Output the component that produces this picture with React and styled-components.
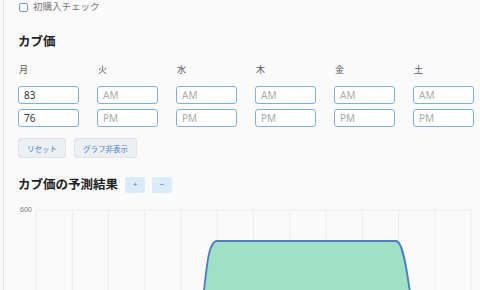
import styled, { createGlobalStyle } from 'styled-components';

const GlobalStyle = createGlobalStyle`
  html, body {
    margin: 0;
    padding: 0;
    background: #fafafa;
    overflow: hidden;
  }
  body {
    font-family: "Noto Sans", "Noto Sans CJK JP", sans-serif;
  }
`;

const days = ['月', '火', '水', '木', '金', '土'];
const am = ['83', '', '', '', '', ''];
const pm = ['76', '', '', '', '', ''];

export default function App() {
  const cols = Array.from({ length: 13 }, (_, i) => 18 + i * 36.25);
  return (
    <>
      <GlobalStyle />
      <Page>
        <CheckRow>
          <Box />
          <CheckLabel>初購入チェック</CheckLabel>
        </CheckRow>

        <Heading>カブ価</Heading>

        <Grid>
          {days.map((d) => (
            <DayLabel key={d}>{d}</DayLabel>
          ))}
          {am.map((v, i) => (
            <Field key={'a' + i} defaultValue={v} placeholder="AM" />
          ))}
          {pm.map((v, i) => (
            <Field key={'p' + i} defaultValue={v} placeholder="PM" />
          ))}
        </Grid>

        <ButtonRow>
          <GrayButton>リセット</GrayButton>
          <GrayButton>グラフ非表示</GrayButton>
        </ButtonRow>

        <TitleRow>
          <Heading2>カブ価の予測結果</Heading2>
          <ZoomButton>+</ZoomButton>
          <ZoomButton>−</ZoomButton>
        </TitleRow>

        <Chart width="460" height="100">
          <text x="2" y="12" fontSize="7" fill="#777" fontFamily="Liberation Sans, sans-serif">600</text>
          <line x1="18" y1="10" x2="453" y2="10" stroke="#ececec" strokeWidth="1" />
          {cols.map((x, i) => (
            <line key={i} x1={x} y1="10" x2={x} y2="100" stroke="#ececec" strokeWidth="1" />
          ))}
          <path
            d="M 185 100 C 189 62, 191 41, 199 41 L 378 41 C 384 41, 388 62, 393 100 Z"
            fill="#a0e0c4"
            stroke="#4b7ec8"
            strokeWidth="1.8"
          />
        </Chart>
      </Page>
    </>
  );
}

const Page = styled.div`
  margin-left: 3px;
  border-left: 1px solid #e4e4e4;
  padding: 1px 0 0 14px;
  min-height: 300px;
`;

const CheckRow = styled.div`
  display: flex;
  align-items: center;
  gap: 5px;
  height: 12px;
  padding-left: 1px;
`;

const Box = styled.span`
  box-sizing: border-box;
  width: 9px;
  height: 9px;
  border: 1px solid #7393e0;
  border-radius: 2px;
  background: #fff;
`;

const CheckLabel = styled.span`
  font-size: 9.5px;
  color: #777;
  line-height: 12px;
`;

const Heading = styled.h2`
  margin: 21px 0 0 0;
  font-size: 12.5px;
  font-weight: 700;
  color: #222;
  line-height: 16px;
`;

const Grid = styled.div`
  display: grid;
  grid-template-columns: repeat(6, 61px);
  column-gap: 18px;
  row-gap: 5px;
  margin-top: 14px;
  & > :nth-child(-n + 6) {
    margin-bottom: 5px;
  }
`;

const DayLabel = styled.span`
  font-size: 9px;
  color: #555;
  line-height: 12px;
  padding-left: 1px;
`;

const Field = styled.input`
  box-sizing: border-box;
  width: 61px;
  height: 18px;
  border: 1px solid #7fb0dc;
  border-radius: 3px;
  background: #fff;
  padding: 0 5px;
  font-family: "Noto Sans", sans-serif;
  font-size: 10px;
  color: #333;
  outline: none;
  &::placeholder {
    color: #aaa;
  }
`;

const ButtonRow = styled.div`
  display: flex;
  gap: 8px;
  margin-top: 11px;
`;

const GrayButton = styled.button`
  height: 20px;
  padding: 0 8px;
  border: 1px solid #e2e5ea;
  border-radius: 2px;
  background: #edeff2;
  color: #4a86d0;
  font-family: "Noto Sans", "Noto Sans CJK JP", sans-serif;
  font-size: 7.5px;
`;

const TitleRow = styled.div`
  display: flex;
  align-items: center;
  gap: 7px;
  margin-top: 19px;
`;

const Heading2 = styled.h2`
  margin: 0;
  font-size: 12.5px;
  font-weight: 700;
  color: #222;
  line-height: 16px;
`;

const ZoomButton = styled.button`
  width: 20px;
  height: 16px;
  padding: 0;
  border: none;
  border-radius: 2px;
  background: #dcebf8;
  color: #4a86d0;
  font-size: 8px;
  line-height: 16px;
`;

const Chart = styled.svg`
  display: block;
  margin-top: 7px;
`;
